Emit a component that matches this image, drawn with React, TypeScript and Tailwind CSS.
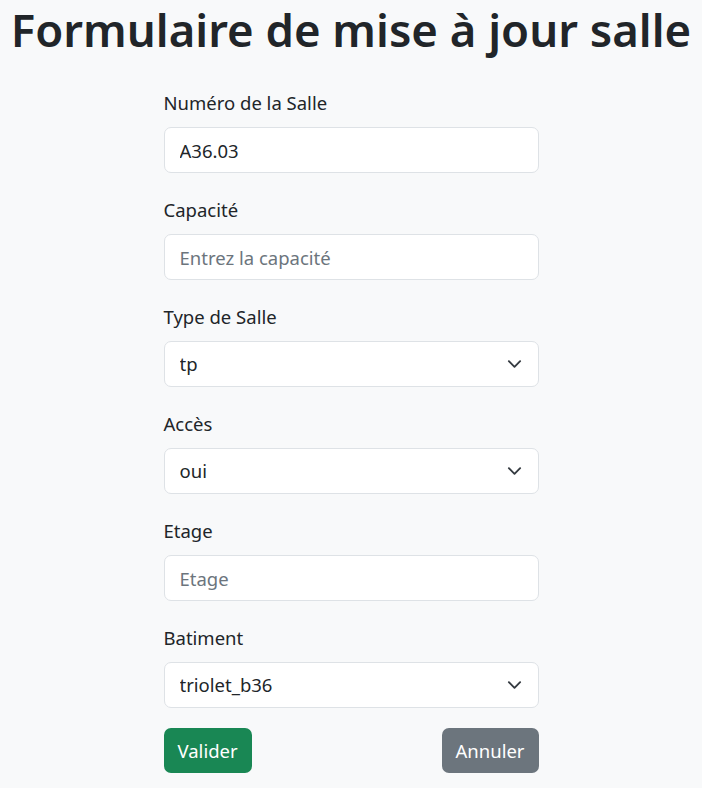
import React, { useState } from 'react';

const font = { fontFamily: '"Noto Sans", "Open Sans", sans-serif' };

const Chevron: React.FC = () => (
  <svg
    className="pointer-events-none absolute right-[17px] top-1/2 -translate-y-1/2"
    width="15"
    height="15"
    viewBox="0 0 16 16"
    fill="none"
    stroke="#343a40"
    strokeWidth={2}
    strokeLinecap="round"
    strokeLinejoin="round"
  >
    <path d="m2 5 6 6 6-6" />
  </svg>
);

const inputCls =
  'block w-full h-[46px] rounded-[7px] border border-[#dee2e6] bg-white px-[15px] text-[18.5px] text-[#212529] placeholder:text-[#6c757d] outline-none';

const Field: React.FC<{ label: string; children: React.ReactNode }> = ({ label, children }) => (
  <div className="mb-[22px]">
    <label className="mb-[10px] block text-[18.5px] leading-[29px] text-[#212529]">{label}</label>
    {children}
  </div>
);

const SelectField: React.FC<{ label: string; value: string; options: string[] }> = ({ label, value, options }) => {
  const [v, setV] = useState(value);
  return (
    <Field label={label}>
      <div className="relative">
        <select value={v} onChange={(e) => setV(e.target.value)} className={inputCls + ' appearance-none pr-[44px]'}>
          {options.map((o) => (
            <option key={o} value={o}>
              {o}
            </option>
          ))}
        </select>
        <Chevron />
      </div>
    </Field>
  );
};

const App: React.FC = () => {
  const [numero, setNumero] = useState('A36.03');

  return (
    <div className="min-h-screen bg-[#f8f9fa] text-[#212529]" style={font}>
      <h1 className="text-center text-[45.5px] font-semibold leading-[58px] whitespace-nowrap">
        Formulaire de mise à jour salle
      </h1>

      <form className="mx-auto mt-[30px] w-[375px]" onSubmit={(e) => e.preventDefault()}>
        <Field label="Numéro de la Salle">
          <input className={inputCls} value={numero} onChange={(e) => setNumero(e.target.value)} />
        </Field>

        <Field label="Capacité">
          <input className={inputCls} placeholder="Entrez la capacité" />
        </Field>

        <SelectField label="Type de Salle" value="tp" options={['tp', 'td', 'amphi']} />
        <SelectField label="Accès" value="oui" options={['oui', 'non']} />

        <Field label="Etage">
          <input className={inputCls} placeholder="Etage" />
        </Field>

        <SelectField label="Batiment" value="triolet_b36" options={['triolet_b36', 'triolet_b16']} />

        <div className="-mt-[2px] flex items-center justify-between">
          <button type="submit" className="h-[45px] rounded-[7px] bg-[#198754] px-[14px] text-[18.5px] text-white">
            Valider
          </button>
          <button type="button" className="h-[45px] rounded-[7px] bg-[#6c757d] px-[14px] text-[18.5px] text-white">
            Annuler
          </button>
        </div>
      </form>
    </div>
  );
};

export default App;
